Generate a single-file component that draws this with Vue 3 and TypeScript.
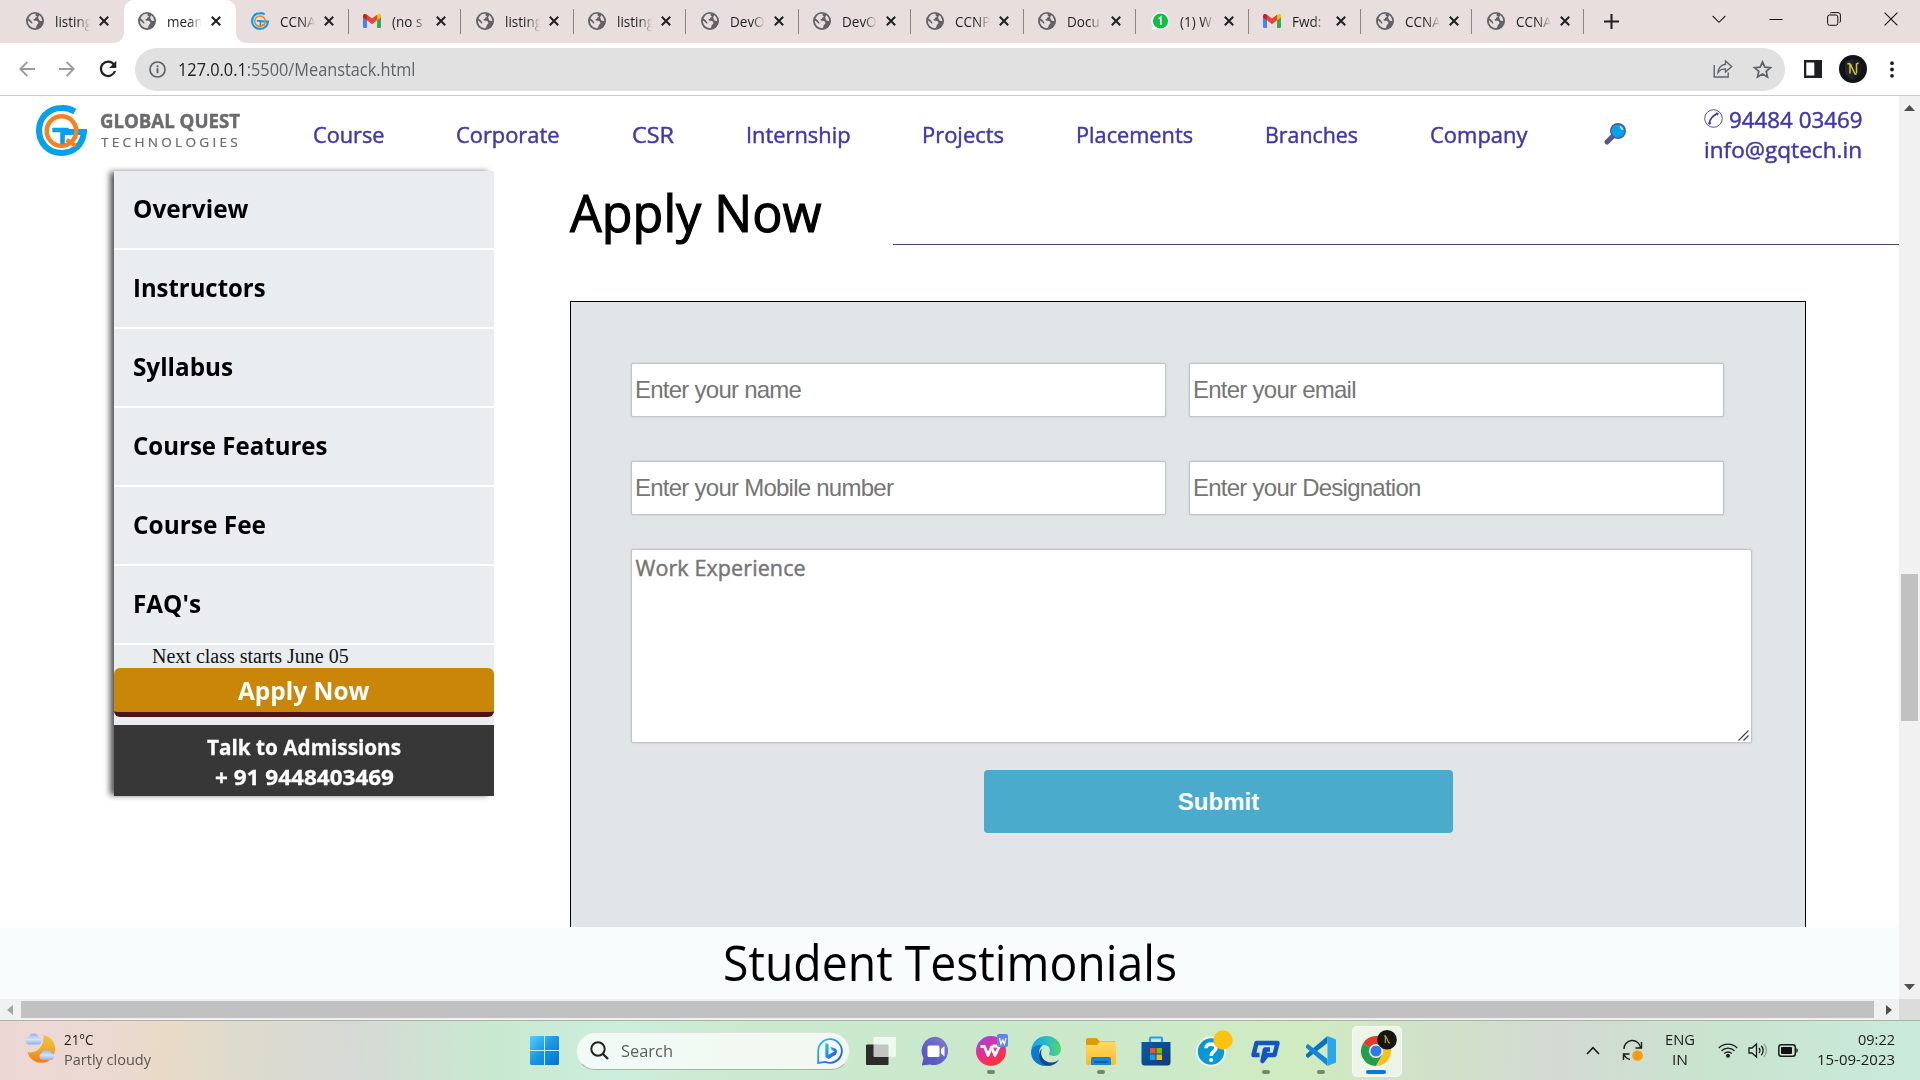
<script setup lang="ts">
import type { Directive } from 'vue'

type TabIcon = 'globe' | 'gq' | 'gmail' | 'whatsapp'
interface Tab { title: string; icon: TabIcon; active?: boolean; plain?: boolean }
interface Label { text: string; width: number }

// Condenses a run of text horizontally to the given advance width.
const vFit: Directive<HTMLElement, number> = {
  mounted(el, binding) {
    const natural = el.getBoundingClientRect().width
    if (!natural) return
    el.style.transform = `scaleX(${binding.value / natural})`
    el.style.marginRight = `${binding.value - natural}px`
  },
}

const tabs: Tab[] = [
  { title: 'listing', icon: 'globe', plain: true },
  { title: 'mean', icon: 'globe', active: true },
  { title: 'CCNA', icon: 'gq' },
  { title: '(no s', icon: 'gmail' },
  { title: 'listing', icon: 'globe' },
  { title: 'listing', icon: 'globe' },
  { title: 'DevO', icon: 'globe' },
  { title: 'DevO', icon: 'globe' },
  { title: 'CCNP', icon: 'globe' },
  { title: 'Docu', icon: 'globe' },
  { title: '(1) W', icon: 'whatsapp' },
  { title: 'Fwd:', icon: 'gmail' },
  { title: 'CCNA', icon: 'globe' },
  { title: 'CCNA', icon: 'globe' },
]

const nav: Label[] = [
  { text: 'Course', width: 71.5 },
  { text: 'Corporate', width: 103.5 },
  { text: 'CSR', width: 42 },
  { text: 'Internship', width: 104.5 },
  { text: 'Projects', width: 82 },
  { text: 'Placements', width: 117 },
  { text: 'Branches', width: 93 },
  { text: 'Company', width: 97.5 },
]

const sections: Label[] = [
  { text: 'Overview', width: 115.5 },
  { text: 'Instructors', width: 132.5 },
  { text: 'Syllabus', width: 100 },
  { text: 'Course Features', width: 194.5 },
  { text: 'Course Fee', width: 133 },
  { text: "FAQ's", width: 68 },
]
</script>

<template>
  <div class="screen">
    <svg class="defs" width="0" height="0">
      <defs>
        <symbol id="gq" viewBox="0 0 50 50">
          <path d="M38 6.500A23 23 0 0 0 25 3C12 3 3 13 3 25s9 22 22 22 21-9 22-20.500H27" fill="none" stroke="#05a0ee" stroke-width="6" />
          <circle cx="25" cy="25.500" r="14.500" fill="none" stroke="#f58220" stroke-width="4.400" />
          <path d="M30 34l9 6" stroke="#f58220" stroke-width="4" />
          <path d="M16 24.500h16M26 24.500v14" stroke="#05a0ee" stroke-width="4.500" fill="none" />
        </symbol>
        <symbol id="globe" viewBox="0 0 18 18">
          <circle cx="9" cy="9" r="9" fill="#5f6368" />
          <path d="M10 1.700c-1 1-.5 2 .4 2.200.9.300.2 1.300-.7 1.500-1 .300-.4 1.500-1.500 1.700-1.200.200-.700 1.700.500 1.700 1.800 0 3.500.200 3.700 2 .2 1.500-1.500 1.500-1.800 2.700-.2 1.200-.4 2.500-1.600 2.700A7.200 7.200 0 0 1 1.900 8.200L6.200 12c.3-1.600-.2-2.500-1.200-3.300C4.200 8 3.700 7 2.400 6.800A7.200 7.200 0 0 1 10 1.700zM13.300 3.300c1.800 1.300 2.800 3.300 2.900 5.500-1.500.7-3.200-.2-3.400-1.500-.1-1.300-1.200-1.800-.4-2.600z" fill="#e8dedd" />
        </symbol>
      </defs>
    </svg>

    <header class="tabstrip">
      <div v-for="(tab, i) in tabs" :key="i" class="tab" :class="{ active: tab.active, plain: tab.plain }">
        <svg v-if="tab.icon === 'globe'" class="favicon" viewBox="0 0 18 18"><use href="#globe" /></svg>
        <svg v-else-if="tab.icon === 'gq'" class="favicon" viewBox="0 0 50 50"><use href="#gq" /></svg>
        <svg v-else-if="tab.icon === 'gmail'" class="favicon" viewBox="0 0 18 18">
          <path d="M0 4.500V15a1 1 0 0 0 1 1h3V8z" fill="#4285f4" />
          <path d="M18 4.500V15a1 1 0 0 1-1 1h-3V8z" fill="#34a853" />
          <path d="M4 2.700v5.600l5 3.900 5-3.900V2.700L9 6.600z" fill="#ea4335" />
          <path d="M0 4c0-2 2-2.500 4-1.300v5.600L0 5.400z" fill="#c5221f" />
          <path d="M18 4c0-2-2-2.500-4-1.300v5.600l4-2.900z" fill="#fbbc04" />
        </svg>
        <svg v-else class="favicon" viewBox="0 0 18 18">
          <path d="M9.500.2a8.800 8.800 0 1 1-4 16.600L.5 18l1.200-4.500A8.800 8.800 0 0 1 9.500.2z" fill="#fff" />
          <circle cx="9.500" cy="9" r="7.600" fill="#0fc143" />
          <path d="M7.700 6.800L9.800 5v8" fill="none" stroke="#fff" stroke-width="1.600" />
        </svg>
        <span class="tab-title"><span>{{ tab.title }}</span></span>
        <svg class="tab-close" viewBox="0 0 10 10"><path d="M.8.8l8.400 8.400M9.200.8L.8 9.200" stroke="#1f2023" stroke-width="2" /></svg>
      </div>
      <svg class="new-tab" viewBox="0 0 16 16"><path d="M8 0v16M0 8h16" stroke="#1f2023" stroke-width="2.200" /></svg>
      <div class="window-controls">
        <svg width="14" height="14" viewBox="0 0 14 14"><path d="M.7 4l6.300 6.300L13.300 4" fill="none" stroke="#222" stroke-width="1.100" /></svg>
        <svg width="14" height="14" viewBox="0 0 14 14"><path d="M.5 7.500h13" stroke="#111" /></svg>
        <svg width="14" height="14" viewBox="0 0 14 14" fill="none" stroke="#111"><rect x=".6" y="3" width="10.200" height="10.300" rx="2" /><path d="M3 1.400c.5-.6 1-.8 1.700-.8H11a2.400 2.400 0 0 1 2.400 2.400v6c0 .8-.3 1.300-.8 1.700" /></svg>
        <svg width="14" height="14" viewBox="0 0 14 14"><path d="M.6.600l12.800 12.800M13.400.600L.6 13.400" stroke="#111" stroke-width="1.100" /></svg>
      </div>
    </header>

    <div class="toolbar">
      <svg class="nav-arrow" viewBox="0 0 16 16"><path d="M16 8H1.500M8.300 1L1.300 8l7 7" fill="none" stroke="#9b9b9b" stroke-width="1.800" /></svg>
      <svg class="nav-arrow" viewBox="0 0 16 16"><path d="M0 8h14.500M7.700 1l7 7-7 7" fill="none" stroke="#9b9b9b" stroke-width="1.800" /></svg>
      <svg class="reload" viewBox="0 0 18 18"><path d="M15 4.600A7.200 7.200 0 1 0 16 11" fill="none" stroke="#1f2023" stroke-width="2.200" /><path d="M17.300.8v7.100h-7.100z" fill="#1f2023" /></svg>
      <div class="omnibox">
        <svg width="17" height="17" viewBox="0 0 17 17"><circle cx="8.500" cy="8.500" r="7.500" fill="none" stroke="#5f6368" stroke-width="1.700" /><path d="M8.500 7.300v5M8.500 4.300v1.900" stroke="#5f6368" stroke-width="1.900" /></svg>
        <span class="url"><span v-fit="237.500" class="fit">127.0.0.1<i>:5500/Meanstack.html</i></span></span>
        <svg class="share" width="20" height="20" viewBox="0 0 20 20" fill="none" stroke="#5f6368" stroke-width="1.400"><path d="M1.200 6v12h14v-4.500" /><path d="M12.500 2l6.200 5.500-6.200 5.500V9.900c-3.200 0-5.500.8-7.500 3.600.5-4.600 3.300-7.700 7.500-8.200z" /></svg>
        <svg width="19" height="19" viewBox="0 0 19 19"><path d="M9.500 1.800l2.300 5.300 5.700.5-4.300 3.800 1.300 5.600-5-3-5 3 1.300-5.600-4.300-3.800 5.700-.5z" fill="none" stroke="#5f6368" stroke-width="1.700" /></svg>
      </div>
      <svg class="panel-icon" width="18" height="18" viewBox="0 0 18 18"><path d="M0 0h18v18H0zM2.300 2.500v13h8v-13z" fill="#1f2023" fill-rule="evenodd" /></svg>
      <svg class="avatar" width="28" height="28" viewBox="0 0 28 28"><circle cx="14" cy="14" r="14" fill="#101418" /><path d="M14 4l8 3v8c0 5-4 8-8 10-4-2-8-5-8-10V7z" fill="#1f2831" /><path d="M14 4l8 3v8c0 5-4 8-8 10z" fill="#171d24" /><path d="M8.500 9c2-1 3 0 4 2.500l3 6.500c.5 1.500 1.500 1.500 2 .5M11 8.500v10M17.500 18V9l2-1" fill="none" stroke="#e3bd35" stroke-width="1.500" /></svg>
      <svg class="dots" width="4" height="17" viewBox="0 0 4 17" fill="#1f2023"><circle cx="2" cy="2.200" r="1.900" /><circle cx="2" cy="8.500" r="1.900" /><circle cx="2" cy="14.800" r="1.900" /></svg>
    </div>

    <div class="viewport">
      <main class="page">
        <div class="site-header">
          <div class="logo">
            <svg width="51" height="51" viewBox="0 0 50 50"><use href="#gq" /></svg>
            <div class="logo-text">
              <div class="logo-name"><span v-fit="140" class="fit">GLOBAL QUEST</span></div>
              <div class="logo-sub"><span v-fit="140" class="fit">TECHNOLOGIES</span></div>
            </div>
          </div>
          <nav class="menu">
            <a v-for="item in nav" :key="item.text"><span v-fit="item.width" class="fit">{{ item.text }}</span></a>
            <svg width="24" height="24" viewBox="0 0 24 24"><path d="M10.500 13.500L4 20" stroke="#5d548f" stroke-width="5" stroke-linecap="round" /><circle cx="15" cy="9" r="8" fill="#5d548f" /><circle cx="15" cy="9" r="6.600" fill="#03a2f0" /><path d="M17.500 5l1.800 2.200" stroke="#cdeffc" stroke-width="1.700" stroke-linecap="round" /></svg>
          </nav>
          <div class="contact">
            <div>
              <svg width="19" height="19" viewBox="0 0 19 19"><circle cx="9.500" cy="9.500" r="8.800" fill="none" stroke="#3f37ab" stroke-width=".9" /><path d="M5.300 14.500c.5-4.500 3.200-7.800 8-9.800" fill="none" stroke="#3f37ab" stroke-width="1.700" /><path d="M4.500 14.800l2.300-.8M12 4.300l2.300 1.200" stroke="#3f37ab" stroke-width="2.200" /></svg>
              <span v-fit="133.500" class="fit">94484 03469</span>
            </div>
            <div><span v-fit="158" class="fit">info@gqtech.in</span></div>
          </div>
        </div>

        <div class="content">
          <aside class="sidebar">
            <a v-for="s in sections" :key="s.text" class="side-link"><span v-fit="s.width" class="fit">{{ s.text }}</span></a>
            <p class="next-class">Next class starts June 05</p>
            <button class="apply"><span v-fit="131.500" class="fit">Apply Now</span></button>
            <div class="talk">
              <div><span v-fit="194" class="fit">Talk to Admissions</span></div>
              <div><span v-fit="179" class="fit">+ 91 9448403469</span></div>
            </div>
          </aside>

          <section class="form-area">
            <div class="form-head">
              <h1><span v-fit="251.500" class="fit">Apply Now</span></h1>
              <hr>
            </div>
            <form class="form">
              <div class="row">
                <input type="text" placeholder="Enter your name">
                <input type="text" placeholder="Enter your email">
              </div>
              <div class="row">
                <input type="text" placeholder="Enter your Mobile number">
                <input type="text" placeholder="Enter your Designation">
              </div>
              <div class="experience">
                <textarea placeholder="Work Experience"></textarea>
                <svg class="grip" width="11" height="11" viewBox="0 0 11 11"><path d="M.5 10.500l10-10M5.500 10.500l5-5" stroke="#4a4a4a" stroke-width="1.300" /></svg>
              </div>
              <button type="button" class="submit">Submit</button>
            </form>
          </section>
        </div>

        <section class="testimonials"><h2><span v-fit="454" class="fit">Student Testimonials</span></h2></section>
      </main>

      <div class="vscroll">
        <svg width="11" height="6" viewBox="0 0 11 6"><path d="M5.500 0L11 6H0z" fill="#505050" /></svg>
        <div class="vthumb"></div>
        <svg class="down" width="11" height="6" viewBox="0 0 11 6"><path d="M0 0h11L5.500 6z" fill="#505050" /></svg>
      </div>
    </div>
    <div class="hscroll">
      <svg width="6" height="10" viewBox="0 0 6 10"><path d="M6 0v10L0 5z" fill="#a3a3a3" /></svg>
      <div class="hthumb"></div>
      <svg width="6" height="10" viewBox="0 0 6 10"><path d="M0 0v10l6-5z" fill="#505050" /></svg>
      <div class="corner"></div>
    </div>

    <footer class="taskbar">
      <div class="weather">
        <svg width="31" height="30" viewBox="0 0 31 30">
          <defs>
            <linearGradient id="moon" x2="0" y2="1"><stop stop-color="#f6c04b" /><stop offset=".5" stop-color="#eeae27" /><stop offset="1" stop-color="#f27a16" /></linearGradient>
            <linearGradient id="cloud" x2="0" y2="1"><stop stop-color="#8fb4ec" /><stop offset=".55" stop-color="#d3e3fa" /><stop offset="1" stop-color="#8aaee6" /></linearGradient>
          </defs>
          <path d="M18.500 3A14 14 0 1 1 2.500 20c8 2 17-4 16-17z" fill="url(#moon)" />
          <path d="M4 12.500a3.900 3.900 0 0 1 0-7.700 5 5 0 0 1 9.400 0 3.900 3.900 0 0 1 0 7.700z" fill="url(#cloud)" />
          <path d="M17 28a3.900 3.900 0 0 1 0-7.300 4.800 4.800 0 0 1 9 0 3.700 3.700 0 0 1 0 7.300z" fill="url(#cloud)" />
        </svg>
        <div class="two-line">
          <div><span v-fit="29.500" class="fit">21°C</span></div>
          <div class="dim"><span v-fit="87" class="fit">Partly cloudy</span></div>
        </div>
      </div>

      <svg class="start" width="29" height="29" viewBox="0 0 29 29">
        <defs><linearGradient id="win" x2="1" y2="1"><stop stop-color="#4fd0ff" /><stop offset=".5" stop-color="#1a95e4" /><stop offset="1" stop-color="#0471d0" /></linearGradient></defs>
        <path d="M1 0h13v14H0V1zM15 0h13l1 1v13H15zM0 15h14v14H1l-1-1zM15 15h14v13l-1 1H15z" fill="url(#win)" />
      </svg>

      <div class="search">
        <svg width="19" height="19" viewBox="0 0 19 19" fill="none" stroke="#222" stroke-width="2"><circle cx="8" cy="8" r="6.700" /><path d="M12.800 12.800l5.200 5.200" stroke-width="2.300" /></svg>
        <span class="search-text"><span v-fit="52" class="fit">Search</span></span>
        <svg class="bing" width="26" height="26" viewBox="0 0 26 26">
          <defs><linearGradient id="bg" x2="1" y2="1"><stop stop-color="#21c7ee" /><stop offset=".45" stop-color="#2e8ff2" /><stop offset="1" stop-color="#1b50b8" /></linearGradient></defs>
          <path d="M13 1.200a11.800 11.800 0 1 1-4.500 22.700L1.200 25V13A11.800 11.800 0 0 1 13 1.200z" fill="#f3fbff" stroke="url(#bg)" stroke-width="1.800" />
          <path d="M8.300 5l3.200 1.300v10.500l6-3.500-2.800-1.300-1.200-3.300 5.300 2c1.500 1 1.500 5-.5 6.300L11.500 21l-3.200-2z" fill="url(#bg)" />
        </svg>
      </div>

      <div class="apps">
        <div class="app"><svg viewBox="0 0 30 30"><rect y="8.500" width="22.500" height="20.500" rx="1" fill="#2b2b29" /><rect x="7.500" y="1" width="22.500" height="20" rx="1" fill="#fff" opacity=".72" /></svg></div>
        <div class="app"><svg viewBox="0 0 30 30"><defs><linearGradient id="chat" x1="1" x2="0" y2="1"><stop stop-color="#8a7cc8" /><stop offset=".5" stop-color="#6165c8" /><stop offset="1" stop-color="#5450bd" /></linearGradient></defs><path d="M15 .8A14.200 14.200 0 1 1 9 28.500L.8 29.500 2.500 22A14.200 14.200 0 0 1 15 .8z" fill="url(#chat)" /><rect x="6.500" y="9.500" width="12" height="11.500" rx="1.500" fill="#fff" /><path d="M20 13l3.500-3v10.500L20 17.500z" fill="#fff" /></svg></div>
        <div class="app running"><svg viewBox="0 0 30 30"><defs><linearGradient id="wps" x2=".6" y2="1"><stop stop-color="#844cff" /><stop offset=".5" stop-color="#ea2b94" /><stop offset="1" stop-color="#ff3434" /></linearGradient></defs><circle cx="15" cy="15" r="15" fill="url(#wps)" /><path d="M4.500 10.500h4l3.500 9 3.500-8.500 3.500 8.500 4.500-9.500h-7" fill="none" stroke="#fff" stroke-width="2.800" stroke-linejoin="round" /><rect x="21" y="-2" width="11" height="13" rx="2" fill="#5888ec" /><path d="M23.500 2l1.500 6 1.700-4 1.700 4 1.500-6" fill="none" stroke="#fff" stroke-width="1.200" /></svg></div>
        <div class="app"><svg viewBox="0 0 30 30"><defs><linearGradient id="edge" x2="1"><stop stop-color="#1b9de2" /><stop offset=".55" stop-color="#29bec5" /><stop offset="1" stop-color="#5bd568" /></linearGradient></defs><path d="M.3 14C1.500 5 8 0 15.500 0 24 0 30 6.500 30 13c0 4.500-3 7-7 7-4.500 0-5.500-1.800-4.700-3.200 1.500-2.500.5-7.300-5-7.800C8 8.500 2.500 11 .3 14z" fill="url(#edge)" /><path d="M.2 14C2 10.300 8 8 12 9.200c-3.500 2-4.500 6-3.500 10C10 25 15 29 19 29.500 8 32-1.500 24 .2 14z" fill="#0c78cf" /><path d="M11 12.500c-3 7 2 14 9 14 3.500 0 6-1 8-3-2.200 4-6.500 6.300-10.500 6.300C8 29 5.500 18 11 12.500z" fill="#114a8c" /></svg></div>
        <div class="app running"><svg viewBox="0 0 30 30"><defs><linearGradient id="folder" x2="0" y2="1"><stop stop-color="#ffda69" /><stop offset="1" stop-color="#f9bb25" /></linearGradient></defs><path d="M0 4a2 2 0 0 1 2-2h8.500l3 3H29v9H0z" fill="#dd9b08" /><path d="M0 9h11l3-3.500h14a2 2 0 0 1 2 2V27a2 2 0 0 1-2 2H2a2 2 0 0 1-2-2z" fill="url(#folder)" /><path d="M5 29v-6a2 2 0 0 1 2-2h16a2 2 0 0 1 2 2v6z" fill="#1684d8" /><path d="M8.500 26h13" stroke="#0e5ca5" stroke-width="2" /></svg></div>
        <div class="app"><svg viewBox="0 0 30 30"><defs><linearGradient id="store" x2="1" y2="1"><stop stop-color="#075bad" /><stop offset="1" stop-color="#123d71" /></linearGradient></defs><path d="M9 7V2.500a1 1 0 0 1 1-1h10a1 1 0 0 1 1 1V7" fill="none" stroke="#20a4ec" stroke-width="2.200" /><path d="M.5 6h29v20.500a3 3 0 0 1-3 3h-23a3 3 0 0 1-3-3z" fill="url(#store)" /><path d="M9 12h5.500v5.500H9z" fill="#f25022" /><path d="M15.500 12H21v5.500h-5.500z" fill="#7fba00" /><path d="M9 18.500h5.500V24H9z" fill="#00a4ef" /><path d="M15.500 18.500H21V24h-5.500z" fill="#ffb900" /></svg></div>
        <div class="app"><svg viewBox="0 0 30 30"><circle cx="15" cy="15.500" r="15" fill="#f5fbfd" /><circle cx="15" cy="15.500" r="13.200" fill="#0998d5" /><path d="M10 12.200C10 6.500 20 7 20 12c0 3.500-4.800 3.500-4.800 8" fill="none" stroke="#fff" stroke-width="3.600" /><circle cx="15.200" cy="24" r="2.100" fill="#fff" /><circle cx="27" cy="4" r="9.700" fill="#ffc20e" /></svg></div>
        <div class="app running"><svg viewBox="0 0 30 30"><path d="M8.500 19H2.500L5.500 7h21l-3 12H16l-4.500 6 2.500-11.500h5" fill="none" stroke="#1354c9" stroke-width="4.500" stroke-linejoin="round" /></svg></div>
        <div class="app running"><svg viewBox="0 0 30 30"><path d="M21.500 7L2 22 0 20.500v-2.200L21.500 0z" fill="#0873bd" /><path d="M21.500 23L2 8 0 9.500v2.200L21.500 30z" fill="#1288d6" /><path d="M21.500 0L30 3.500v23L21.500 30z" fill="#29a7ee" /></svg></div>
        <div class="app current"><svg viewBox="0 0 30 30"><path d="M15 15L2 7.500a15 15 0 0 1 26 0z" fill="#e33b2e" /><path d="M15 15h0L2 7.500A15 15 0 0 0 15 30l6.500-11.300z" fill="#269d4b" /><path d="M15 15L28 7.500A15 15 0 0 1 15 30l6.500-11.300z" fill="#fbc116" /><circle cx="15" cy="15" r="7" fill="#fff" /><circle cx="15" cy="15" r="5.600" fill="#2d7bea" /><circle cx="26" cy="3.700" r="9.800" fill="#151512" /><path d="M23 0c1.200-.6 1.700.2 2.300 1.500l2.300 4.800c.4.800 1 .8 1.400.2M24.300 0v7" fill="none" stroke="#c9a72f" stroke-width="1.100" /></svg></div>
      </div>

      <div class="tray">
        <svg width="14" height="9" viewBox="0 0 14 9"><path d="M1 8l6-6.300L13 8" fill="none" stroke="#1b1b1b" stroke-width="1.700" /></svg>
        <svg class="sync" width="21" height="21" viewBox="0 0 21 21"><path d="M2 9A8.300 8.300 0 0 1 18.500 7.500M19.500 2v6h-6M1.500 20v-6h6M2 14.500c1 2.400 3 4.200 6 5" fill="none" stroke="#1b1b1b" stroke-width="1.400" /><circle cx="15.500" cy="15.500" r="5.300" fill="#ff9b0b" /></svg>
        <div class="two-line lang"><div><span v-fit="30" class="fit">ENG</span></div><div><span v-fit="16" class="fit">IN</span></div></div>
        <svg class="wifi" width="20" height="16" viewBox="0 0 20 16" fill="none" stroke="#1b1b1b" stroke-width="1.300"><path d="M.8 6a13 13 0 0 1 18.400 0M3.500 8.800a9.200 9.200 0 0 1 13 0M6.300 11.500a5.300 5.300 0 0 1 7.400 0" /><circle cx="10" cy="13.800" r="1.300" fill="#1b1b1b" /></svg>
        <svg class="volume" width="20" height="17" viewBox="0 0 20 17" fill="none" stroke="#1b1b1b" stroke-width="1.300"><path d="M1 6v5h3l4.500 4V2L4 6zM11 6a4 4 0 0 1 0 5" /><path d="M13.300 3.800a7 7 0 0 1 0 9.400" /><path d="M15.800 1.800a10 10 0 0 1 0 13.400" stroke="#8f9f90" /></svg>
        <svg class="battery" width="21" height="13" viewBox="0 0 21 13"><rect x=".8" y=".8" width="16.500" height="11.400" rx="2.500" fill="none" stroke="#1b1b1b" stroke-width="1.500" /><rect x="3" y="3" width="11" height="7" rx="1" fill="#111" /><path d="M18.300 4.300c2 0 2 4.400 0 4.400z" fill="#1b1b1b" /></svg>
        <div class="two-line clock"><div><span v-fit="37" class="fit">09:22</span></div><div><span v-fit="78" class="fit">15-09-2023</span></div></div>
      </div>
    </footer>
  </div>
</template>

<style>
html, body { margin: 0; overflow: hidden; }
</style>

<style scoped>
.screen {
  width: 1920px;
  height: 1080px;
  display: flex;
  flex-direction: column;
  overflow: hidden;
  background: #fff;
  font-family: "Open Sans", "Noto Sans", sans-serif;
}
.screen * { box-sizing: border-box; }
.screen svg { flex: none; overflow: visible; display: block; }
.defs { position: absolute; }
.fit { display: inline-block; white-space: nowrap; transform-origin: 0 50%; }

/* tab strip */
.tabstrip { flex: none; height: 43px; display: flex; align-items: center; padding-left: 11px; background: #e8dedd; }
.tab { width: 112.500px; height: 43px; flex: none; display: flex; align-items: center; padding: 0 0 1px 14.600px; position: relative; }
.tab:nth-child(n + 13) { width: 111.300px; }
.tab:not(.active):not(.plain)::after { content: ""; position: absolute; right: 0; top: 9px; width: 1px; height: 25px; background: #8b8584; }
.tab.active { background: #fff; border-radius: 10px 10px 0 0; }
.tab.active::before, .tab.active::after { content: ""; position: absolute; bottom: 0; width: 10px; height: 10px; }
.tab.active::before { left: -10px; background: radial-gradient(circle at 0 0, transparent 9.500px, #fff 10px); }
.tab.active::after { right: -10px; background: radial-gradient(circle at 100% 0, transparent 9.500px, #fff 10px); }
.favicon { width: 18px; height: 18px; }
.tab-title { flex: none; width: 54px; margin: 0 -20px 0 11px; font-size: 15px; line-height: 22px; color: #1f1f1f; white-space: nowrap; -webkit-mask-image: linear-gradient(90deg, #000 22px, transparent 35px); mask-image: linear-gradient(90deg, #000 22px, transparent 35px); }
.tab-title span { display: inline-block; transform: scaleX(.9); transform-origin: 0 50%; }
.tab-close { flex: none; width: 10px; height: 10px; margin-left: 10px; }
.new-tab { width: 15px; height: 15px; margin-left: 20px; }
.window-controls { display: flex; gap: 43.300px; margin-left: auto; margin-right: 22px; padding-bottom: 6px; }

/* toolbar */
.toolbar { flex: none; height: 53px; display: flex; align-items: center; border-bottom: 1px solid #cbcbcb; padding-left: 18.500px; }
.nav-arrow { width: 16px; height: 16px; margin-right: 24px; }
.reload { width: 18px; height: 18px; }
.omnibox { width: 1650px; height: 43px; margin-left: 18px; border-radius: 22px; background: #e1e1e1; display: flex; align-items: center; padding: 0 13px 0 14px; }
.url { margin-left: 12px; font-size: 17.500px; line-height: 24px; color: #202124; }
.url i { font-style: normal; color: #5f6368; }
.share { margin-left: auto; margin-right: 20px; }
.panel-icon { margin-left: 19px; }
.avatar { margin-left: 17px; }
.dots { margin-left: 23px; }

/* page */
.viewport { flex: none; height: 903px; display: flex; }
.page { width: 1899px; display: flex; flex-direction: column; background: #fff; overflow: hidden; }
.site-header { flex: none; height: 75px; display: flex; align-items: flex-start; color: #3f37ab; font-weight: 500; font-size: 22px; line-height: 30px; -webkit-text-stroke: .45px currentColor; }
.logo { width: 312.500px; display: flex; padding: 9px 0 0 36px; }
.logo-text { margin-left: 13px; color: #6b6b6d; }
.logo-name { height: 25px; padding-top: 5px; font-weight: 700; font-size: 19px; line-height: 22px; }
.logo-sub { font-size: 12.500px; line-height: 18px; padding-top: 4px; letter-spacing: 3px; margin-left: 1px; -webkit-text-stroke: .2px currentColor; }
.menu { display: flex; align-items: center; gap: 72px; height: 30px; margin-top: 23px; }
.menu svg { margin-left: 3px; }
.contact { margin-left: auto; width: 195px; padding-top: 7.500px; }
.contact > div { display: flex; align-items: center; height: 30px; gap: 5.500px; }
.content { flex: none; height: 756px; display: flex; align-items: flex-start; }

/* sidebar */
.sidebar { width: 380px; height: 625px; margin-left: 114px; display: flex; flex-direction: column; background: #e9edf0; box-shadow: -5px 0 6px -1px #555; }
.side-link { height: 79px; border-bottom: 2px solid #fff; padding-left: 19px; font-size: 25px; line-height: 75.500px; font-weight: 700; color: #000; }
.next-class { margin: 0; height: 23px; padding-left: 38px; font: 20px/23px "Liberation Serif", serif; color: #111; }
.apply { height: 49px; padding: 0; border: 0; border-bottom: 5px solid #4d1616; border-radius: 6px; background: #c98608; color: #fff; font: 700 25px/44px "Open Sans", sans-serif; text-align: center; }
.talk { margin-top: 8px; height: 71px; padding-top: 6px; background: #373737; color: #fff; font-weight: 700; font-size: 22px; line-height: 30px; text-align: center; -webkit-text-stroke: .3px #fff; }

/* application form */
.form-area { flex: 1; margin-left: 76px; }
.form-head { display: flex; height: 130px; }
.form-head h1 { width: 323px; margin: 0; font-weight: 500; font-size: 50.500px; line-height: 83px; color: #000; -webkit-text-stroke: 1.100px #000; }
.form-head hr { flex: 1; margin: 73px 0 0; border: 0; height: 1px; align-self: flex-start; background: #4a4468; }
.form { width: 1236px; height: 626px; border: 1px solid #000; border-bottom: 0; background: #e1e5e8; padding: 61px 0 0 60px; display: flex; flex-direction: column; }
.row { display: flex; gap: 23px; height: 54px; margin-bottom: 44px; }
.row input { width: 535px; height: 54px; padding: 0 3px 1px; border: 1px solid #c2c4c6; border-radius: 2px; background: #fff; box-shadow: 0 0 2px #b9bcbe; font: 24px "Liberation Sans", Arial, sans-serif; letter-spacing: -.750px; outline: 0; }
.row input::placeholder, .form textarea::placeholder { color: #757575; opacity: 1; }
.experience { position: relative; width: 1121px; height: 194px; margin-top: -10px; }
.form textarea { display: block; width: 100%; height: 100%; resize: none; padding: 2.500px 3.500px; border: 1px solid #c2c4c6; border-radius: 2px; background: #fff; box-shadow: 0 0 2px #b9bcbe; font: 500 21.500px/30px "Open Sans", sans-serif; letter-spacing: .1px; -webkit-text-stroke: .45px #757575; outline: 0; }
.grip { position: absolute; right: 3px; bottom: 2px; }
.submit { width: 469px; height: 63px; margin: 27px 0 0 353px; border: 0; border-radius: 4px; background: #4babcd; color: #fff; font: 700 24px "Liberation Sans", Arial, sans-serif; }
.testimonials { flex: none; height: 72px; background: #f8fcfd; }
.testimonials h2 { margin: 0; padding-left: 723px; font-weight: 400; font-size: 50px; line-height: 70px; color: #000; }

/* scrollbars */
.vscroll { width: 21px; display: flex; flex-direction: column; align-items: center; padding: 9px 0; background: #f1f1f1; }
.vthumb { width: 17px; height: 147px; margin-top: 463px; background: #c1c1c1; }
.down { margin-top: auto; }
.hscroll { flex: none; height: 21px; display: flex; align-items: center; background: #f1f1f1; padding-left: 7px; }
.hthumb { width: 1853px; height: 17px; margin: 0 12px 0 8px; background: #c1c1c1; }
.corner { width: 21px; height: 21px; margin-left: auto; background: #dcdcdc; }

/* taskbar */
.taskbar { flex: none; height: 60px; border-top: 1px solid #aab2aa; display: flex; align-items: center; padding-left: 25px; background: linear-gradient(92deg, #ecd7d5 0, #ebd9d2 110px, #e9dac7 165px, #dddbcd 240px, #d7d9d6 350px, #c9e8d0 490px, #cceedc 620px, #cbe9cf 740px, #cae8cb 950px, #cceac9 1150px, #d0ebc0 1310px, #d1e1c9 1430px, #d4dad3 1560px, #c9e4cf 1710px, #c9eadb 1920px); color: #1b1b1b; }
.weather { width: 505px; display: flex; padding-bottom: 2px; }
.two-line { font-size: 15px; line-height: 20px; }
.weather .two-line { margin-left: 8px; margin-top: -3px; height: 38px; }
.dim { color: #59544f; }
.search { width: 274px; height: 38px; margin-left: 17px; border-radius: 19px; background: rgba(255, 255, 255, .72); border: 1px solid rgba(120, 140, 120, .18); border-bottom-color: rgba(90, 110, 90, .5); display: flex; align-items: center; padding: 0 6px 0 13px; }
.search-text { margin-left: 12px; font-size: 17px; line-height: 24px; color: #5c605d; }
.bing { margin-left: auto; }
.apps { display: flex; margin-left: 3px; }
.app { width: 55px; height: 59px; display: flex; align-items: center; justify-content: center; position: relative; }
.app svg { width: 30px; height: 30px; position: relative; }
.app.running::after { content: ""; position: absolute; bottom: 6px; left: 23.500px; width: 8px; height: 4px; border-radius: 2px; background: #75866f; }
.app.current::before { content: ""; position: absolute; left: 3.500px; top: 5px; width: 48px; height: 49px; border-radius: 5px; background: rgba(255, 255, 255, .6); border: 1px solid rgba(255, 255, 255, .45); }
.app.current::after { content: ""; position: absolute; bottom: 6px; left: 17.500px; width: 20px; height: 4px; border-radius: 2px; background: #0c78d6; }
.tray { display: flex; align-items: center; margin-left: 183px; padding-bottom: 1px; }
.sync { margin-left: 22px; }
.lang { width: 31px; margin-left: 21.500px; text-align: center; }
.lang, .clock { margin-top: -2px; }
.wifi { margin-left: 22px; }
.volume { margin-left: 10px; }
.battery { margin-left: 10px; }
.clock { width: 80px; margin-left: 16.500px; text-align: right; }
</style>
